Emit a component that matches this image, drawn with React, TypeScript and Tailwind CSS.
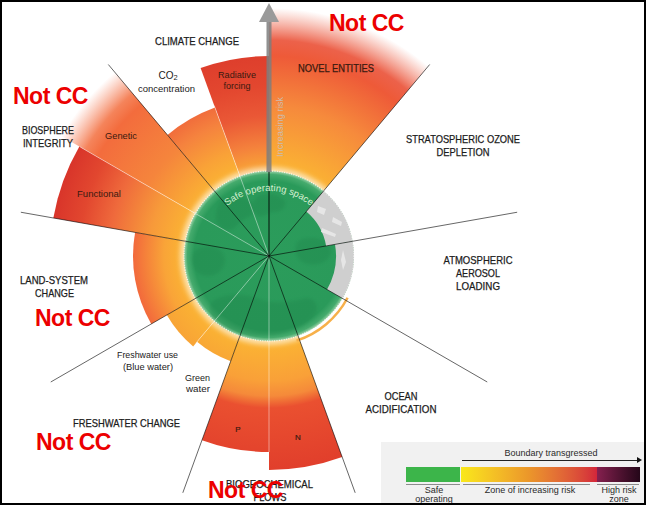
import React from "react"

const CX = 269
const CY = 256
const FONT = "'Liberation Sans', Arial, sans-serif"

function pt(a: number, r: number): [number, number] {
  const rad = (a * Math.PI) / 180
  return [CX + r * Math.sin(rad), CY - r * Math.cos(rad)]
}

// annular sector, angles clockwise from north
function wedge(a1: number, a2: number, r: number, r0 = 0) {
  const [x1, y1] = pt(a1, r)
  const [x2, y2] = pt(a2, r)
  if (r0 === 0) return `M${CX} ${CY}L${x1} ${y1}A${r} ${r} 0 0 1 ${x2} ${y2}Z`
  const [x3, y3] = pt(a2, r0)
  const [x4, y4] = pt(a1, r0)
  return `M${x4} ${y4}L${x1} ${y1}A${r} ${r} 0 0 1 ${x2} ${y2}L${x3} ${y3}A${r0} ${r0} 0 0 0 ${x4} ${y4}Z`
}

function arc(a1: number, a2: number, r: number) {
  const [x1, y1] = pt(a1, r)
  const [x2, y2] = pt(a2, r)
  return `M${x1} ${y1}A${r} ${r} 0 0 1 ${x2} ${y2}`
}

type Stop = [number, string, number?]

const GR = 250
const grads: Record<string, Stop[]> = {
  base: [[85, "#fbb533"], [110, "#f9a237"], [140, "#f5833e"], [170, "#ee5e3a"], [200, "#e2442e"], [230, "#dc392b"]],
  land: [[85, "#fbb533"], [105, "#f9a438"], [136, "#f2693c"]],
  water: [[85, "#fbb533"], [118, "#f8a436"]],
  hot: [[85, "#f9a936"], [110, "#f4813c"], [140, "#ea5836"], [170, "#e3472f"], [205, "#dd3d2c"]],
  flow: [[85, "#fbb533"], [125, "#f9a038"], [140, "#f58a3a"], [152, "#ea5030"], [220, "#e03d2b"]],
  func: [[85, "#fbb533"], [120, "#f79a3a"], [160, "#ef6a3c"], [190, "#e2472f"], [220, "#d8342a"]],
  genetic: [[85, "#fbb533"], [140, "#f5853c"], [198, "#f36c3d", 1], [212, "#f36e3e", 0.85], [240, "#f57a55", 0]],
  novel: [[85, "#fbb533"], [150, "#f68a3c"], [200, "#ee5a38", 1], [216, "#ea5036", 0.9], [248, "#ee6a4f", 0]],
}

const wedges = [
  { a1: 0, a2: 40, r: 250, g: "novel" },
  { a1: 340, a2: 360, r: 200, g: "hot" },
  { a1: 320, a2: 340, r: 158, g: "base" },
  { a1: 300, a2: 320, r: 242, g: "genetic" },
  { a1: 280, a2: 300, r: 219, g: "func" },
  { a1: 240, a2: 280, r: 136, g: "land" },
  { a1: 220, a2: 240, r: 118, g: "water" },
  { a1: 200, a2: 220, r: 112, g: "water" },
  { a1: 180, a2: 200, r: 196, g: "flow" },
  { a1: 160, a2: 180, r: 214, g: "flow" },
]

const mainLines = [
  [40, 250],
  [80, 252],
  [120, 252],
  [160, 252],
  [200, 252],
  [240, 252],
  [280, 252],
  [320, 250],
]

const subLines = [
  [340, 160],
  [300, 218],
  [220, 114],
  [180, 196],
]

type Label = { t: string; x: number; y: number; w?: number; s?: number; fill?: string }

const caps: Label[] = [
  { t: "CLIMATE CHANGE", x: 197, y: 45, w: 84 },
  { t: "NOVEL ENTITIES", x: 336, y: 72, w: 76, fill: "#3a1a10" },
  { t: "STRATOSPHERIC OZONE", x: 463, y: 143, w: 114 },
  { t: "DEPLETION", x: 463, y: 156, w: 53 },
  { t: "ATMOSPHERIC", x: 478, y: 264, w: 69 },
  { t: "AEROSOL", x: 478, y: 277, w: 44 },
  { t: "LOADING", x: 478, y: 290, w: 44 },
  { t: "OCEAN", x: 401, y: 400, w: 33 },
  { t: "ACIDIFICATION", x: 401, y: 413, w: 71 },
  { t: "BIOSPHERE", x: 48, y: 134, w: 52 },
  { t: "INTEGRITY", x: 48, y: 147, w: 50 },
  { t: "LAND-SYSTEM", x: 54, y: 284, w: 68 },
  { t: "CHANGE", x: 54.5, y: 297, w: 39 },
  { t: "FRESHWATER CHANGE", x: 126.5, y: 427, w: 107 },
  { t: "BIOGEOCHEMICAL", x: 269.5, y: 488, w: 87 },
  { t: "FLOWS", x: 270, y: 501, w: 33 },
]

const small: Label[] = [
  { t: "concentration", x: 166.5, y: 92, w: 57 },
  { t: "Radiative", x: 237, y: 78, w: 38, fill: "#3a1a10" },
  { t: "forcing", x: 237, y: 89, w: 27, fill: "#3a1a10" },
  { t: "Genetic", x: 121, y: 139, w: 32, fill: "#3a1a10" },
  { t: "Functional", x: 99, y: 197, w: 44, fill: "#3a1a10" },
  { t: "Freshwater use", x: 147.5, y: 358, w: 61 },
  { t: "(Blue water)", x: 148, y: 370, w: 50 },
  { t: "Green", x: 197.5, y: 381, w: 25 },
  { t: "water", x: 198, y: 392, w: 24 },
]

function Diagram() {
  return (
    <svg width={642} height={501} viewBox="2 2 642 501" className="block">
      <defs>
        {Object.entries(grads).map(([id, stops]) => (
          <radialGradient key={id} id={`g-${id}`} gradientUnits="userSpaceOnUse" cx={CX} cy={CY} r={GR}>
            {stops.map(([r, c, o], i) => (
              <stop key={i} offset={r / GR} stopColor={c} stopOpacity={o ?? 1} />
            ))}
          </radialGradient>
        ))}
        <radialGradient id="globe" cx="50%" cy="50%" r="50%">
          <stop offset="0" stopColor="#2b9c5b" />
          <stop offset="0.88" stopColor="#2a9a5a" />
          <stop offset="0.96" stopColor="#45ab6d" />
          <stop offset="1" stopColor="#9dd3a8" />
        </radialGradient>
        <filter id="blur3" x="-20%" y="-20%" width="140%" height="140%">
          <feGaussianBlur stdDeviation="2.5" />
        </filter>
        <filter id="blur1" x="-20%" y="-20%" width="140%" height="140%">
          <feGaussianBlur stdDeviation="1.5" />
        </filter>
        <path id="sos" d={arc(-44, 44, 65)} />
      </defs>

      {wedges.map((w, i) => (
        <path key={i} d={wedge(w.a1, w.a2, w.r)} fill={`url(#g-${w.g})`} />
      ))}

      {/* halo round the globe */}
      <circle cx={CX} cy={CY} r={89} fill="#fff" opacity={0.6} filter="url(#blur3)" />
      <circle cx={CX} cy={CY} r={85} fill="url(#globe)" />

      {/* continents */}
      <g fill="#1e8248" opacity={0.3} filter="url(#blur1)">
        <path d="M222 200c10-6 22-4 30 2 6 6 2 14-6 16-8 4-10 12-18 12-8 0-14-8-12-16 1-6 2-11 6-14z" />
        <path d="M258 196c8-4 20-2 26 4 4 6-2 12-10 12-6 0-10 6-16 4-6-4-6-16 0-20z" />
        <path d="M196 250c8-6 20-4 26 2 6 8 2 18-6 22-8 4-18 2-22-6-3-6-3-14 2-18z" />
        <path d="M214 300c14-8 34-6 48 0 14 4 30 2 44-2 10 0 14 10 8 18-10 12-30 20-52 20-20 0-38-6-48-16-6-8-6-16 0-20z" />
        <path d="M300 240c10-4 24-2 30 6 4 8-2 16-12 18-10 2-20-2-22-10-1-6-1-11 4-14z" />
      </g>

      {/* grey part inside the safe space */}
      <path d={wedge(40, 80, 85, 58)} fill="#cfcfcf" />
      <path d={wedge(80, 120, 85, 67)} fill="#cfcfcf" />
      <g fill="#e6e6e6">
        <path d="M318 206l8 3-2 6-7-3z" />
        <path d="M333 217l9 5-1 4-9-4z" />
        <path d="M322 228l14 6-1 3-14-5z" />
        <path d="M343 250l3 12-3 8-2-10z" />
      </g>

      <circle cx={CX} cy={CY} r={85} fill="none" stroke="#fff" strokeWidth={1.3} strokeDasharray="0.8 1.6" opacity={0.9} />

      {/* ocean acidification, just outside the boundary */}
      <path d={arc(118, 162, 89)} fill="none" stroke="#f7b04a" strokeWidth={2.5} />

      {subLines.map(([a, r], i) => {
        const [x, y] = pt(a, r)
        return <line key={i} x1={CX} y1={CY} x2={x} y2={y} stroke="#fff" strokeOpacity={0.45} strokeWidth={1} />
      })}
      {mainLines.map(([a, r], i) => {
        const [x, y] = pt(a, r)
        return <line key={i} x1={CX} y1={CY} x2={x} y2={y} stroke="#000" strokeOpacity={0.6} strokeWidth={1} />
      })}

      {/* increasing risk arrow */}
      <line x1={CX} y1={CY} x2={CX} y2={172} stroke="#000" strokeOpacity={0.6} strokeWidth={1.5} />
      <rect x={CX - 2.5} y={20} width={5} height={152} fill="#7e7e7e" opacity={0.85} />
      <path d={`M${CX - 10} 22L${CX} 3L${CX + 10} 22Z`} fill="#9a9a9a" />
      <text
        transform={`translate(283 127) rotate(-90)`}
        textAnchor="middle"
        fontFamily={FONT}
        fontSize={9}
        fill="#cdbcb0"
        textLength={60}
        lengthAdjust="spacingAndGlyphs"
      >
        Increasing risk
      </text>

      <text fontFamily={FONT} fontSize={9.5} fill="#d4efd0">
        <textPath href="#sos" startOffset="50%" textAnchor="middle">
          Safe operating space
        </textPath>
      </text>

      <g fontFamily={FONT} textAnchor="middle">
        {caps.map((l, i) => (
          <text
            key={i}
            x={l.x}
            y={l.y}
            fontSize={10.5}
            fill={l.fill ?? "#1c1c1c"}
            stroke={l.fill ?? "#1c1c1c"}
            strokeWidth={0.25}
            textLength={l.w}
            lengthAdjust="spacingAndGlyphs"
          >
            {l.t}
          </text>
        ))}
        {small.map((l, i) => (
          <text
            key={i}
            x={l.x}
            y={l.y}
            fontSize={9.5}
            fill={l.fill ?? "#222"}
            textLength={l.w}
            lengthAdjust="spacingAndGlyphs"
          >
            {l.t}
          </text>
        ))}
        <text x={168} y={79} fontSize={10} fill="#222">
          CO<tspan fontSize={7.5} dy={1}>2</tspan>
        </text>
        <text x={238} y={432} fontSize={8} fill="#3a1a10" stroke="#3a1a10" strokeWidth={0.2}>
          P
        </text>
        <text x={298} y={440} fontSize={8} fill="#3a1a10" stroke="#3a1a10" strokeWidth={0.2}>
          N
        </text>
      </g>
    </svg>
  )
}

function Legend() {
  return (
    <div className="absolute left-[379px] top-[440px] w-[263px] h-[61px] overflow-hidden bg-[#f1f1f1] pl-[25px] pt-[6px] font-['Liberation_Sans',Arial,sans-serif] text-[#2a2a2a]">
      <div className="ml-[56px] w-[178px] text-center text-[9px] leading-[10px]">Boundary transgressed</div>
      <div className="relative ml-[56px] mt-[2px] h-px w-[176px] bg-[#222]">
        <div className="absolute -right-[4px] -top-[3px] h-0 w-0 border-y-[3.5px] border-l-[5px] border-y-transparent border-l-[#111]" />
      </div>
      <div className="mt-[6px] flex h-[15px]">
        <div className="w-[54px] bg-[#3cb54a]" />
        <div className="ml-[1px] w-[136px] bg-linear-to-r from-[#f9e81a] via-[#eb962a] to-[#d3253a]" />
        <div className="w-[43px] bg-linear-to-r from-[#86204f] to-[#250719]" />
      </div>
      <div className="mt-[2px] flex h-px">
        <div className="w-[54px] bg-[#8c8c8c]" />
        <div className="ml-[3px] w-[127px] bg-[#8c8c8c]" />
        <div className="ml-[7px] w-[42px] bg-[#8c8c8c]" />
      </div>
      <div className="mt-[1px] flex text-[9px] leading-[9px]">
        <div className="w-[56px] text-center">
          Safe operating
          <br />
          space
        </div>
        <div className="w-[136px] text-center">Zone of increasing risk</div>
        <div className="w-[42px] text-center">
          High risk
          <br />
          zone
        </div>
      </div>
    </div>
  )
}

const notCC = [
  "left-[327px] top-[10px]",
  "left-[11px] top-[83px]",
  "left-[33px] top-[305px]",
  "left-[34px] top-[429px]",
  "left-[206px] top-[477px]",
]

export default function App() {
  return (
    <div className="relative h-[505px] w-[646px] overflow-hidden border-2 border-black bg-white">
      <Diagram />
      <Legend />
      {notCC.map((pos, i) => (
        <span
          key={i}
          className={`absolute ${pos} font-['Liberation_Sans',Arial,sans-serif] text-[23px] font-bold leading-none tracking-[-0.5px] text-[#ec0000]`}
        >
          Not CC
        </span>
      ))}
    </div>
  )
}
